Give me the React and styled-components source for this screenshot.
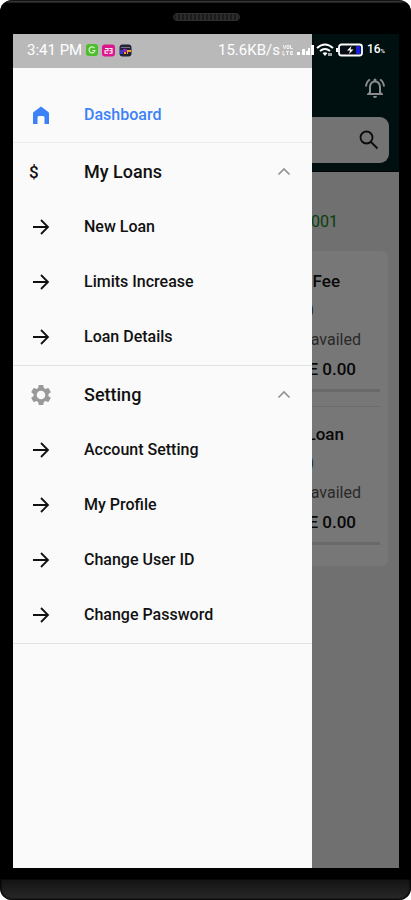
import React, { useState } from 'react';
import styled, { createGlobalStyle } from 'styled-components';

const GlobalStyle = createGlobalStyle`
  * { box-sizing: border-box; }
  body { margin: 0; background: #fff; font-family: Roboto, "Liberation Sans", sans-serif; }
  button, input { font: inherit; color: inherit; margin: 0; padding: 0; border: 0; background: none; }
  svg { display: block; flex: none; }
`;

const Phone = styled.div`
  display: flex;
  flex-direction: column;
  min-height: 100vh;
  padding: 0 12px 0 13px;
  overflow: hidden;
  background: linear-gradient(#484848 0 2px, #000 3px calc(100% - 21px), #141414 calc(100% - 20px), #292929);
  border-radius: 12px;
  box-shadow: inset 0 0 2px 1px #000;
`;

const Earpiece = styled.div`
  align-self: center;
  width: 67px;
  height: 8px;
  margin: 13px 0;
  border: 1px solid #303030;
  border-radius: 4px;
  background: repeating-linear-gradient(90deg, #1b1b1b 0 2px, #2b2b2b 2px 4px);
`;

const Screen = styled.div`
  position: relative;
  flex: 1;
  display: flex;
  flex-direction: column;
  overflow: hidden;
  margin-bottom: 32px;
  background: #707070;
`;

const StatusBar = styled.header`
  position: absolute;
  inset: 0 0 auto;
  z-index: 2;
  display: flex;
  align-items: center;
  height: 34px;
  padding: 0 14px 2px;
  color: #fff;
  font-size: 15px;
  line-height: 20px;
`;

const StatusGroup = styled.div`
  display: flex;
  align-items: center;
  gap: ${p => p.$gap}px;
  white-space: nowrap;
  &:last-child { margin-left: auto; }
`;

const Percent = styled.span`
  padding-left: 2px;
  font-size: 12px;
  font-weight: 500;
  small { font-size: 6px; }
`;

const AppHeader = styled.div`
  display: flex;
  flex-direction: column;
  align-items: flex-end;
  gap: 17px;
  padding: 42px 10px 8px;
  background: #001011;
  border-bottom: 1px solid #000606;
`;

const IconButton = styled.button`
  display: grid;
  place-items: center;
  width: 28px;
  height: 24px;
  color: #8b8b8b;
`;

const Search = styled.label`
  display: flex;
  align-items: center;
  width: 100%;
  height: 46px;
  padding: 0 8px 0 16px;
  border-radius: 9px;
  background: #737373;
  color: #0b0b0b;
  input { flex: 1; min-width: 0; outline: 0; }
`;

const Reference = styled.p`
  margin: 0;
  padding: 40px 61px 19px 0;
  color: #073f0b;
  font-size: 16px;
  line-height: 20px;
  text-align: right;
`;

const Card = styled.section`
  margin: 0 11px 0 12px;
  padding: 20px 8px 21px;
  border-radius: 6px;
  background: #777;
`;

const Loan = styled.article`
  display: flex;
  flex-direction: column;
  align-items: flex-end;
  white-space: nowrap;
  & + & { margin-top: 14px; padding-top: 17px; border-top: 1px solid #6c6c6c; }
`;

const LoanTitle = styled.h3`
  margin: 0 ${p => p.$inset}px 9px 0;
  color: #080808;
  font-size: 17px;
  font-weight: 500;
  line-height: 20px;
`;

const Count = styled.span`
  margin-right: 66px;
  color: #292929;
  font-size: 16px;
  line-height: 20px;
`;

const LoanState = styled.span`
  margin: 10px 19px 8px 0;
  color: #292929;
  font-size: 16px;
  line-height: 20px;
`;

const Amount = styled.strong`
  margin-right: 24px;
  color: #080808;
  font-size: 17px;
  font-weight: 500;
  line-height: 22px;
`;

const Track = styled.span`
  width: 100%;
  height: 3px;
  margin-top: 9px;
  background: #696969;
`;

const Drawer = styled.aside`
  position: absolute;
  inset: 0 auto 0 0;
  z-index: 1;
  width: calc(100% - 87px);
  max-width: 304px;
  overflow-y: auto;
  border-top: 34px solid #b9b9b9;
  background: #fafafa;
  color: #111;
`;

const Menu = styled.nav`
  display: flex;
  flex-direction: column;
  padding-top: 19px;
`;

const Group = styled.div`
  display: flex;
  flex-direction: column;
  padding-bottom: ${p => (p.$plain ? 0 : 1)}px;
  border-bottom: 1px solid ${p => (p.$plain ? '#ededed' : '#e1e1e1')};
`;

const MenuLink = styled.a`
  display: grid;
  grid-template-columns: 55px 1fr;
  align-items: center;
  height: 55px;
  padding: 0 16px;
  color: ${p => (p.$active ? '#3b82f6' : '#111')};
  font-size: 16px;
  font-weight: 500;
  line-height: 20px;
  text-decoration: none;
`;

const GroupButton = styled.button`
  display: grid;
  grid-template-columns: 55px 1fr 24px;
  align-items: center;
  height: 56px;
  text-align: left;
  && { padding: 2px 16px 0; font-size: 18px; font-weight: 500; line-height: 22px; }
`;

const Dollar = styled.span`
  font-size: 17px;
  font-weight: 500;
`;

const Icon = ({ children, size = 24, color = 'currentColor', box = '0 0 24 24' }) => (
  <svg width={size} height={size} viewBox={box} fill={color} aria-hidden="true">{children}</svg>
);

const Home = () => (
  <Icon><path d="M4 10.500Q4 9.500 5 8.700L12 3.500l7 5.200q1 .8 1 1.800V21h-4.500v-6.500q0-1.500-1.500-1.500h-4Q8.500 13 8.500 14.500V21H4z" /></Icon>
);
const Arrow = () => (
  <Icon><path d="M4 12h14.500M12 5l7 7-7 7" fill="none" stroke="currentColor" strokeWidth="1.800" /></Icon>
);
const Chevron = () => (
  <Icon><path d="m6.500 14.500 5.500-5.500 5.500 5.500" fill="none" stroke="#929292" strokeWidth="1.700" /></Icon>
);
const Gear = () => (
  <Icon color="#999">
    <path fillRule="evenodd" d="M19.4 13a7.8 7.8 0 0 0 0-2l2.1-1.6a.5.5 0 0 0 .1-.7l-2-3.4a.5.5 0 0 0-.6-.2l-2.500 1a7.300 7.300 0 0 0-1.700-1l-.4-2.600a.5.5 0 0 0-.5-.5h-3.800a.5.5 0 0 0-.5.5l-.4 2.600a7.300 7.300 0 0 0-1.700 1L5 5.100a.5.5 0 0 0-.6.2l-2 3.400a.5.5 0 0 0 .1.7L4.600 11a7.800 7.800 0 0 0 0 2l-2.100 1.600a.5.5 0 0 0-.1.7l2 3.400c.1.2.4.3.6.2l2.500-1a7.300 7.300 0 0 0 1.700 1l.4 2.600c0 .3.2.5.5.5h3.800c.3 0 .5-.2.5-.5l.4-2.600a7.300 7.300 0 0 0 1.700-1l2.500 1c.2.1.5 0 .6-.2l2-3.400a.5.5 0 0 0-.1-.7zM12 16.300a4.300 4.300 0 1 1 0-8.600 4.300 4.300 0 0 1 0 8.600z" />
  </Icon>
);
const Bell = () => (
  <Icon>
    <path d="M12 22a2 2 0 0 0 2-2h-4a2 2 0 0 0 2 2zm6-6v-5c0-3-1.600-5.600-4.500-6.300V4a1.500 1.500 0 0 0-3 0v.7C7.600 5.400 6 8 6 11v5l-2 2v1h16v-1zm-2 1H8v-6c0-2.500 1.500-4.500 4-4.500s4 2 4 4.500zM7.600 4.100 6.200 2.700A10.500 10.500 0 0 0 2 10.500h2a8.500 8.500 0 0 1 3.600-6.400zm12.400 6.400h2a10.500 10.500 0 0 0-4.200-7.800l-1.400 1.400a8.500 8.500 0 0 1 3.600 6.400z" />
  </Icon>
);
const Magnifier = () => (
  <Icon>
    <path d="M15.500 9.500a6 6 0 1 1-12 0 6 6 0 0 1 12 0zM14 14l6.500 6.500" fill="none" stroke="currentColor" strokeWidth="1.800" />
  </Icon>
);
const ChatApp = () => (
  <Icon size={12} box="0 0 12 12">
    <rect width="12" height="12" rx="3" fill="#4dbd2b" />
    <path d="M8.500 4.200A3 3 0 1 0 9 6.500H6.300" fill="none" stroke="#d6f5cc" strokeWidth="1.200" />
  </Icon>
);
const CalendarApp = () => (
  <Icon size={13} box="0 0 13 13">
    <rect width="13" height="12" y=".5" rx="3" fill="#dc168b" />
    <path d="M3 4.500h3v2.300H3v2.400h3M7.200 4.500H10v4.700H7.200M7.500 6.800H10" fill="none" stroke="#fff" strokeWidth="1.100" />
  </Icon>
);
const GameApp = () => (
  <Icon size={13} box="0 0 13 13">
    <rect width="12" height="12" x=".5" y=".5" rx="3" fill="#252338" />
    <path d="M2 3h9v1H2z" fill="#77777d" />
    <path d="M1 6h3v4H1z" fill="#3437d5" />
    <path d="M4 5h4v3H4z" fill="#8c25bb" />
    <path d="M8 6h4v2H9v2H8zM5 8h2v2H5z" fill="#f3a51c" />
  </Icon>
);
const Volte = () => (
  <svg width="12" height="12" viewBox="0 0 12 12" fill="none" stroke="#f2f2f2" aria-hidden="true">
    <path d="m1 1 1.500 4L4 1M5 1.500h2v3H5zM8.500 1v3.500H11M1 7v4h2M4 7.500h3M5.500 7.500V11M11 7.500H8.500v3H11M8.500 9H11" />
  </svg>
);
const Signal = () => (
  <svg width="18" height="12" viewBox="0 0 18 12" fill="#fff" aria-hidden="true">
    <path d="M1 8h3v3H1zM6 5h3v6H6zM10 7h2v4h-2zM12 4h2v7h-2zM15 1h3v10h-3z" />
  </svg>
);
const Wifi = () => (
  <svg width="18" height="14" viewBox="0 0 18 14" fill="none" stroke="#fff" strokeWidth="2" aria-hidden="true">
    <path d="M1 5q8-7 16 0M4 8q5-4 10 0" />
    <path d="m6.500 10 2.500 3 2.500-3q-2.500-1.500-5 0z" fill="#fff" stroke="none" />
    <path d="M13 10v3M15 10v3" strokeWidth="1.200" />
  </svg>
);
const Battery = () => (
  <svg width="27" height="14" viewBox="0 0 27 14" aria-hidden="true">
    <rect x="3" y="1.500" width="23" height="11" rx="2.500" fill="#080c14" stroke="#fff" strokeWidth="1.800" />
    <path d="M0 5h2v4H0z" fill="#fff" />
    <path d="M20 3h4.500v8H20z" fill="#1722d7" />
    <path d="m15.500 3-4.500 4.500h3L13 11l4.500-4.500h-3z" fill="#fff" />
  </svg>
);

const groups = [
  { title: 'My Loans', icon: <Dollar>$</Dollar>, items: ['New Loan', 'Limits Increase', 'Loan Details'] },
  { title: 'Setting', icon: <Gear />, items: ['Account Setting', 'My Profile', 'Change User ID', 'Change Password'] },
];

const loans = [
  { title: 'Fee', inset: 40 },
  { title: 'Loan', inset: 36 },
];

function MenuGroup({ title, icon, items }) {
  const [open, setOpen] = useState(true);
  return (
    <Group>
      <GroupButton type="button" aria-expanded={open} onClick={() => setOpen(!open)}>
        {icon}
        <span>{title}</span>
        <Chevron />
      </GroupButton>
      {open && items.map(item => (
        <MenuLink href="#" key={item}><Arrow /><span>{item}</span></MenuLink>
      ))}
    </Group>
  );
}

export default function App() {
  return (
    <>
      <GlobalStyle />
      <Phone>
        <Earpiece />
        <Screen>
          <StatusBar>
            <StatusGroup $gap={4}>
              <span>3:41 PM</span><ChatApp /><CalendarApp /><GameApp />
            </StatusGroup>
            <StatusGroup $gap={2}>
              <span>15.6KB/s</span><Volte /><Signal /><Wifi /><Battery />
              <Percent>16<small>%</small></Percent>
            </StatusGroup>
          </StatusBar>
          <AppHeader>
            <IconButton type="button" aria-label="Notifications"><Bell /></IconButton>
            <Search><input type="search" aria-label="Search" /><Magnifier /></Search>
          </AppHeader>
          <Reference>001</Reference>
          <Card>
            {loans.map(loan => (
              <Loan key={loan.title}>
                <LoanTitle $inset={loan.inset}>{loan.title}</LoanTitle>
                <Count>0)</Count>
                <LoanState>availed</LoanState>
                <Amount>E 0.00</Amount>
                <Track />
              </Loan>
            ))}
          </Card>
          <Drawer>
            <Menu aria-label="Main">
              <Group $plain>
                <MenuLink href="#" $active><Home /><span>Dashboard</span></MenuLink>
              </Group>
              {groups.map(group => <MenuGroup key={group.title} {...group} />)}
            </Menu>
          </Drawer>
        </Screen>
      </Phone>
    </>
  );
}
